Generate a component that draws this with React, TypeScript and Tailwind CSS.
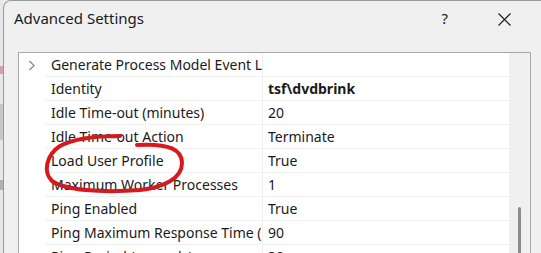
import React from "react";

const rows: { name: string; value: string; bold?: boolean; chevron?: boolean }[] = [
  { name: "Generate Process Model Event Log Entry", value: "", chevron: true },
  { name: "Identity", value: "tsf\\dvdbrink", bold: true },
  { name: "Idle Time-out (minutes)", value: "20" },
  { name: "Idle Time-out Action", value: "Terminate" },
  { name: "Load User Profile", value: "True" },
  { name: "Maximum Worker Processes", value: "1" },
  { name: "Ping Enabled", value: "True" },
  { name: "Ping Maximum Response Time (seconds)", value: "90" },
  { name: "Ping Period (seconds)", value: "30" },
];

export default function App() {
  return (
    <div
      className="relative w-[541px] h-[253px] overflow-hidden bg-[#f0f0f0] flex text-[#1a1a1a]"
      style={{ fontFamily: '"Noto Sans", "Open Sans", sans-serif' }}
    >
      {/* background window strip */}
      <div className="w-[3px] h-full bg-[#e8e8e8] flex flex-col">
        <div className="h-[66px]" />
        <div className="h-[8px] bg-[#d0a0b0]" />
        <div className="h-[30px]" />
        <div className="h-[36px] bg-[#c8c8c8]" />
        <div className="h-[40px]" />
        <div className="h-[10px] bg-[#b0b0b0]" />
      </div>
      {/* dialog */}
      <div className="flex-1 h-full flex flex-col border-l border-t border-[#9a9a9a] rounded-tl-[8px] bg-[#f0f0f0]">
        <div className="h-[35px] flex items-center pl-[10px] pr-[30px] shrink-0">
          <span className="text-[15px] leading-none">Advanced Settings</span>
          <span className="ml-auto text-[15px] leading-none mr-[50px]">?</span>
          <svg width="13" height="13" viewBox="0 0 13 13" className="mt-[1px]">
            <path d="M0.5 0.5 L12.5 12.5 M12.5 0.5 L0.5 12.5" stroke="#1a1a1a" strokeWidth="1.1" />
          </svg>
        </div>
        <div className="h-[16px] shrink-0" />
        <div className="ml-[14px] w-[513px] flex-1 border-l border-t border-r border-[#a8a8a8] flex">
          <div className="w-[490px] bg-white flex flex-col">
            {rows.map((r, i) => (
              <div key={i} className="h-[24px] flex shrink-0">
                <div className="w-[26px] flex items-center justify-center">
                  {r.chevron && (
                    <svg width="8" height="11" viewBox="0 0 8 11">
                      <path d="M1.5 1 L6 5.5 L1.5 10" stroke="#8a8a8a" strokeWidth="1.3" fill="none" />
                    </svg>
                  )}
                </div>
                <div className="flex-1 flex border-b border-[#f0f0f0]">
                  <div className="w-[218px] border-r border-[#f0f0f0] overflow-hidden whitespace-nowrap pl-[6px] text-[14px] leading-[23px]">
                    {r.name}
                  </div>
                  <div
                    className={`flex-1 pl-[5px] text-[14px] leading-[23px] whitespace-nowrap ${
                      r.bold ? "font-bold" : ""
                    }`}
                  >
                    {r.value}
                  </div>
                </div>
              </div>
            ))}
          </div>
          <div className="flex-1 bg-[#f0f0f0] relative">
            <div className="absolute left-[9px] top-[154px] w-[3px] h-[60px] bg-[#8c8c8c] rounded-full" />
          </div>
        </div>
      </div>
      {/* red annotation */}
      <svg className="absolute left-0 top-0 pointer-events-none" width="541" height="253">
        <path
          d="M120 136 C 100 136, 75 138, 60 146 C 46 155, 43 172, 52 181 C 65 190, 100 193, 140 190 C 165 187, 182 178, 182 163 C 182 150, 170 143, 137 145"
          stroke="#d6181f"
          strokeWidth="4"
          fill="none"
          strokeLinecap="round"
        />
      </svg>
    </div>
  );
}
